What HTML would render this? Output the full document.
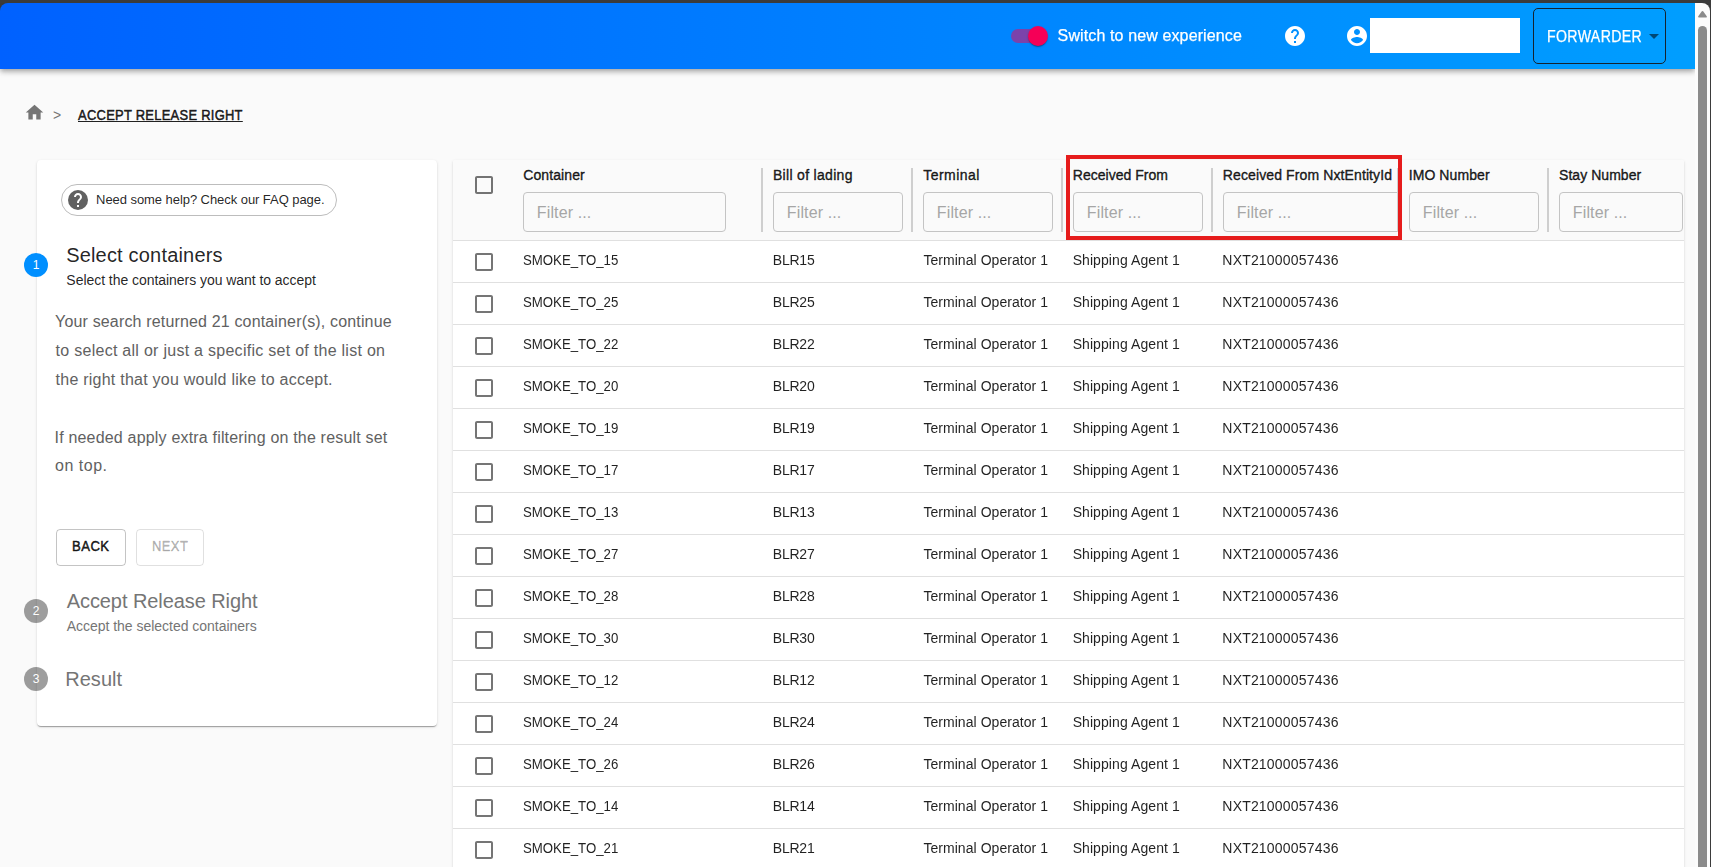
<!DOCTYPE html><html lang="en"><head><meta charset="utf-8"><title>Accept Release Right</title><style>
*{box-sizing:border-box;margin:0;padding:0}
html,body{width:1711px;height:867px;overflow:hidden;background:#3b3b3b}
body{font-family:"Liberation Sans",Arial,sans-serif;color:rgba(0,0,0,.87);position:relative}
.win{position:absolute;left:0;top:3px;width:1710px;height:864px;overflow:hidden}
.bg{position:absolute;left:0;top:40px;width:1710px;height:827px;background:#fafafa}
.pg{position:absolute;left:0;top:-3px;width:1710px;height:867px}
.abs{position:absolute}
.t{position:absolute;white-space:nowrap;line-height:1}
header{position:absolute;left:0;top:3px;width:1695px;height:66px;border-top-left-radius:8px;background:linear-gradient(90deg,#0061ff 0%,#009eff 100%);box-shadow:0 2px 4px -1px rgba(0,0,0,.2),0 4px 5px 0 rgba(0,0,0,.14),0 1px 10px 0 rgba(0,0,0,.12);z-index:5}
.sb{position:absolute;left:1695px;top:3px;width:15px;height:864px;background:#fcfcfc;z-index:6;border-top-right-radius:8px;overflow:hidden}
.sb .thumb{position:absolute;left:3px;top:23px;width:9px;height:900px;border-radius:5px;background:#8b8b8b}
.sb .arr{position:absolute;left:0;top:3px}
.track{position:absolute;left:1011px;top:29px;width:34px;height:14px;border-radius:7px;background:#f50057;opacity:.5;z-index:7}
.knob{position:absolute;left:1028px;top:26px;width:20px;height:20px;border-radius:50%;background:#f50057;box-shadow:0 2px 1px -1px rgba(0,0,0,.2),0 1px 1px 0 rgba(0,0,0,.14),0 1px 3px 0 rgba(0,0,0,.12);z-index:7}
.name{position:absolute;left:1370.300px;top:17.600px;width:149.700px;height:35px;background:#fff;z-index:7}
.role{position:absolute;left:1533px;top:8px;width:133px;height:56px;border:1px solid #15232e;border-radius:5px;z-index:7}
.car{position:absolute;left:1649px;top:34px;width:0;height:0;border-left:5px solid transparent;border-right:5px solid transparent;border-top:5px solid rgba(0,0,0,.54);z-index:7}
.hz{z-index:7}
.card{position:absolute;left:37px;top:160px;width:400px;height:566px;background:#fff;border-radius:4px;box-shadow:0 2px 1px -1px rgba(0,0,0,.2),0 1px 1px 0 rgba(0,0,0,.14),0 1px 3px 0 rgba(0,0,0,.12)}
.chip{position:absolute;left:61px;top:184px;width:276px;height:32px;border:1px solid #bdbdbd;border-radius:16px}
.num{position:absolute;width:24px;height:24px;border-radius:50%;color:#fff;font-size:12px;text-align:center;line-height:24px}
.btn{position:absolute;top:529px;height:37px;border-radius:4px;border:1px solid rgba(0,0,0,.23)}
.tbl{position:absolute;left:453px;top:160px;width:1231px;height:720px;background:#fff;box-shadow:0 2px 1px -1px rgba(0,0,0,.2),0 1px 1px 0 rgba(0,0,0,.14),0 1px 3px 0 rgba(0,0,0,.12);border-radius:2px 2px 0 0}
.thead{position:absolute;left:453px;top:160px;width:1231px;height:81px;background:#fafafa;border-bottom:1px solid #e0e0e0;border-radius:2px 2px 0 0}
.hl{position:absolute;left:453px;width:1231px;height:1px;background:#e0e0e0}
.cb{position:absolute;left:472px;width:24px;height:24px}
.th{-webkit-text-stroke:.4px rgba(0,0,0,.87)}
.fi{position:absolute;top:192px;height:40px;border:1px solid #c4c4c4;border-radius:4px}
.ph{font-size:16px;color:#a6a6a6}
.sep{position:absolute;top:168px;width:2px;height:64px;background:#cfcfcf}
.td{font-size:14px}
.rows{position:absolute;left:0;top:0;width:1695px;height:867px;will-change:transform}
.red{position:absolute;left:1066px;top:155px;width:336px;height:85px;border:4px solid #e61c1c;z-index:4}
</style></head><body><div class="win"><div class="pg"><div class="bg"></div>
<header></header>
<div class="track"></div><div class="knob"></div>
<div class="t hz" id="sw" style="left:1057.61px;top:28px;font-size:16px;letter-spacing:0.122px;color:#fff;-webkit-text-stroke:.25px #fff">Switch to new experience</div>
<svg class="abs hz" style="left:1283px;top:24px" width="24" height="24" viewBox="0 0 24 24"><path fill="#fff" d="M12 2C6.48 2 2 6.48 2 12s4.48 10 10 10 10-4.48 10-10S17.520 2 12 2zm1 17h-2v-2h2v2zm2.070-7.750l-.9.920C13.450 12.900 13 13.500 13 15h-2v-.5c0-1.100.450-2.100 1.170-2.830l1.240-1.260c.370-.360.590-.860.590-1.410 0-1.100-.9-2-2-2s-2 .9-2 2H8c0-2.210 1.790-4 4-4s4 1.790 4 4c0 .880-.360 1.680-.930 2.250z"/></svg>
<svg class="abs hz" style="left:1345px;top:24px" width="24" height="24" viewBox="0 0 24 24"><path fill="#fff" d="M12 2C6.48 2 2 6.48 2 12s4.48 10 10 10 10-4.48 10-10S17.520 2 12 2zm0 3c1.660 0 3 1.340 3 3s-1.340 3-3 3-3-1.340-3-3 1.340-3 3-3zm0 14.200c-2.500 0-4.710-1.280-6-3.220.030-1.990 4-3.080 6-3.080 1.990 0 5.970 1.090 6 3.080-1.290 1.940-3.500 3.220-6 3.220z"/></svg>
<div class="name"></div>
<div class="role"></div><div class="car"></div>
<div class="t hz" id="fw" style="left:1547.4px;top:29px;font-size:16px;transform-origin:0 50%;transform:scaleX(0.8843);letter-spacing:0.4px;color:#fff;-webkit-text-stroke:.25px #fff">FORWARDER</div>
<div class="sb"><svg class="arr" width="15" height="16" viewBox="0 0 15 16"><path d="M7.500 5.800 L11.100 10.800 L3.900 10.800 Z" fill="#8b8b8b" stroke="#8b8b8b" stroke-width="1.600" stroke-linejoin="round"/></svg><div class="thumb"></div></div>
<svg class="abs" style="left:24px;top:102.200px" width="21" height="21" viewBox="0 0 24 24"><path fill="#757575" d="M10 20v-6h4v6h5v-8h3L12 3 2 12h3v8z"/></svg>
<div class="t " id="gt" style="left:53.02px;top:108.3px;font-size:14px;color:#757575">&gt;</div>
<div class="t " id="bc" style="left:78.1px;top:108px;font-size:14px;transform-origin:0 50%;transform:scaleX(0.9235);letter-spacing:0.3px;-webkit-text-stroke:.5px rgba(0,0,0,.87);text-decoration:underline">ACCEPT RELEASE RIGHT</div>
<div class="card"></div>
<div class="chip"></div>
<svg class="abs" style="left:66px;top:188px" width="24" height="24" viewBox="0 0 24 24"><circle cx="12" cy="12" r="10" fill="#616161"/><path fill="#fff" d="M13 19h-2v-2h2v2zm2.070-7.750l-.9.920C13.450 12.900 13 13.500 13 15h-2v-.5c0-1.100.450-2.100 1.170-2.830l1.240-1.260c.370-.360.590-.860.590-1.410 0-1.100-.9-2-2-2s-2 .9-2 2H8c0-2.210 1.790-4 4-4s4 1.790 4 4c0 .880-.360 1.680-.930 2.250z"/></svg>
<div class="t " id="faq" style="left:96.09px;top:193px;font-size:13px;letter-spacing:-0.061px">Need some help? Check our FAQ page.</div>
<div class="num" style="left:24px;top:253px;background:#008fff">1</div>
<div class="t " id="s1" style="left:66.15px;top:245.21px;font-size:20px;letter-spacing:0.188px">Select containers</div>
<div class="t " id="s1b" style="left:66.37px;top:273px;font-size:14px;letter-spacing:-0.048px">Select the containers you want to accept</div>
<div class="t " id="p0" style="left:55.09px;top:314px;font-size:16px;letter-spacing:0.159px;color:#616161">Your search returned 21 container(s), continue</div>
<div class="t " id="p1" style="left:55.58px;top:342.8px;font-size:16px;letter-spacing:0.274px;color:#616161">to select all or just a specific set of the list on</div>
<div class="t " id="p2" style="left:55.58px;top:371.61px;font-size:16px;letter-spacing:0.237px;color:#616161">the right that you would like to accept.</div>
<div class="t " id="p4" style="left:54.57px;top:430.31px;font-size:16px;letter-spacing:0.185px;color:#616161">If needed apply extra filtering on the result set</div>
<div class="t " id="p5" style="left:55.12px;top:458px;font-size:16px;letter-spacing:0.492px;color:#616161">on top.</div>
<div class="btn" style="left:56px;width:70px"></div>
<div class="btn" style="left:136px;width:68px;border-color:rgba(0,0,0,.12)"></div>
<div class="t " id="back" style="left:71.98px;top:539px;font-size:14px;transform-origin:0 50%;transform:scaleX(0.9355);letter-spacing:0.5px;-webkit-text-stroke:.5px rgba(0,0,0,.87)">BACK</div>
<div class="t " id="next" style="left:151.51px;top:539px;font-size:14px;transform-origin:0 50%;transform:scaleX(0.9218);letter-spacing:0.5px;-webkit-text-stroke:.5px rgba(0,0,0,.26);color:rgba(0,0,0,.26)">NEXT</div>
<div class="num" style="left:24px;top:599px;background:rgba(0,0,0,.38)">2</div>
<div class="t " id="s2" style="left:66.69px;top:591px;font-size:20px;letter-spacing:-0.072px;color:#757575">Accept Release Right</div>
<div class="t " id="s2b" style="left:66.68px;top:619px;font-size:14px;letter-spacing:-0.020px;color:#757575">Accept the selected containers</div>
<div class="num" style="left:24px;top:667px;background:rgba(0,0,0,.38)">3</div>
<div class="t " id="s3" style="left:65.2px;top:669px;font-size:20px;letter-spacing:0.044px;color:#757575">Result</div>
<div class="tbl"></div><div class="thead"></div>
<svg class="cb" style="top:173px" viewBox="0 0 24 24"><path fill="rgba(0,0,0,.54)" d="M19 5v14H5V5h14m0-2H5c-1.100 0-2 .9-2 2v14c0 1.100.9 2 2 2h14c1.100 0 2-.9 2-2V5c0-1.100-.9-2-2-2z"/></svg>
<div class="t th" id="th0" style="left:523.18px;top:168px;font-size:14px;letter-spacing:0.108px">Container</div>
<div class="fi" style="left:523px;width:203px"></div>
<div class="t ph" id="ph" style="left:536.87px;top:205px;font-size:16px;letter-spacing:0.113px">Filter ...</div>
<div class="t th" id="th1" style="left:772.96px;top:168px;font-size:14px;letter-spacing:0.308px">Bill of lading</div>
<div class="fi" style="left:773px;width:130px"></div>
<div class="t ph" style="left:786.87px;top:205px;font-size:16px;letter-spacing:0.113px">Filter ...</div>
<div class="t th" id="th2" style="left:923.37px;top:168px;font-size:14px;letter-spacing:0.432px">Terminal</div>
<div class="fi" style="left:923px;width:130px"></div>
<div class="t ph" style="left:936.87px;top:205px;font-size:16px;letter-spacing:0.113px">Filter ...</div>
<div class="t th" id="th3" style="left:1072.85px;top:168px;font-size:14px;letter-spacing:0.014px">Received From</div>
<div class="fi" style="left:1073px;width:130px"></div>
<div class="t ph" style="left:1086.87px;top:205px;font-size:16px;letter-spacing:0.113px">Filter ...</div>
<div class="t th" id="th4" style="left:1222.85px;top:168px;font-size:14px;letter-spacing:0.111px">Received From NxtEntityId</div>
<div class="fi" style="left:1223px;width:178px"></div>
<div class="t ph" style="left:1236.87px;top:205px;font-size:16px;letter-spacing:0.113px">Filter ...</div>
<div class="t th" id="th5" style="left:1408.69px;top:168px;font-size:14px;letter-spacing:0.081px">IMO Number</div>
<div class="fi" style="left:1409px;width:130px"></div>
<div class="t ph" style="left:1422.87px;top:205px;font-size:16px;letter-spacing:0.113px">Filter ...</div>
<div class="t th" id="th6" style="left:1559.06px;top:168px;font-size:14px;letter-spacing:0.045px">Stay Number</div>
<div class="fi" style="left:1559px;width:124px"></div>
<div class="t ph" style="left:1572.87px;top:205px;font-size:16px;letter-spacing:0.113px">Filter ...</div>
<div class="sep" style="left:761px"></div>
<div class="sep" style="left:911px"></div>
<div class="sep" style="left:1061px"></div>
<div class="sep" style="left:1211px"></div>
<div class="sep" style="left:1397px"></div>
<div class="sep" style="left:1547px"></div>
<div class="rows">
<div class="hl" style="top:282px"></div>
<svg class="cb" style="top:250px" viewBox="0 0 24 24"><path fill="rgba(0,0,0,.54)" d="M19 5v14H5V5h14m0-2H5c-1.100 0-2 .9-2 2v14c0 1.100.9 2 2 2h14c1.100 0 2-.9 2-2V5c0-1.100-.9-2-2-2z"/></svg>
<div class="t td" id="c0" style="left:522.71px;top:253.21px;font-size:14px;transform-origin:0 50%;transform:scaleX(0.9446)">SMOKE_TO_15</div>
<div class="t td" id="c1" style="left:772.82px;top:253.21px;font-size:14px;letter-spacing:-0.238px">BLR15</div>
<div class="t td" id="c2" style="left:923.39px;top:253.21px;font-size:14px;letter-spacing:0.051px">Terminal Operator 1</div>
<div class="t td" id="c3" style="left:1072.63px;top:253.21px;font-size:14px;letter-spacing:0.086px">Shipping Agent 1</div>
<div class="t td" id="c4" style="left:1222.33px;top:253.21px;font-size:14px;letter-spacing:0.189px">NXT21000057436</div>
<div class="hl" style="top:324px"></div>
<svg class="cb" style="top:292px" viewBox="0 0 24 24"><path fill="rgba(0,0,0,.54)" d="M19 5v14H5V5h14m0-2H5c-1.100 0-2 .9-2 2v14c0 1.100.9 2 2 2h14c1.100 0 2-.9 2-2V5c0-1.100-.9-2-2-2z"/></svg>
<div class="t td" style="left:522.71px;top:295.21px;font-size:14px;transform-origin:0 50%;transform:scaleX(0.9446)">SMOKE_TO_25</div>
<div class="t td" style="left:772.82px;top:295.21px;font-size:14px;letter-spacing:-0.238px">BLR25</div>
<div class="t td" style="left:923.39px;top:295.21px;font-size:14px;letter-spacing:0.051px">Terminal Operator 1</div>
<div class="t td" style="left:1072.63px;top:295.21px;font-size:14px;letter-spacing:0.086px">Shipping Agent 1</div>
<div class="t td" style="left:1222.33px;top:295.21px;font-size:14px;letter-spacing:0.189px">NXT21000057436</div>
<div class="hl" style="top:366px"></div>
<svg class="cb" style="top:334px" viewBox="0 0 24 24"><path fill="rgba(0,0,0,.54)" d="M19 5v14H5V5h14m0-2H5c-1.100 0-2 .9-2 2v14c0 1.100.9 2 2 2h14c1.100 0 2-.9 2-2V5c0-1.100-.9-2-2-2z"/></svg>
<div class="t td" style="left:522.71px;top:337.21px;font-size:14px;transform-origin:0 50%;transform:scaleX(0.9446)">SMOKE_TO_22</div>
<div class="t td" style="left:772.82px;top:337.21px;font-size:14px;letter-spacing:-0.238px">BLR22</div>
<div class="t td" style="left:923.39px;top:337.21px;font-size:14px;letter-spacing:0.051px">Terminal Operator 1</div>
<div class="t td" style="left:1072.63px;top:337.21px;font-size:14px;letter-spacing:0.086px">Shipping Agent 1</div>
<div class="t td" style="left:1222.33px;top:337.21px;font-size:14px;letter-spacing:0.189px">NXT21000057436</div>
<div class="hl" style="top:408px"></div>
<svg class="cb" style="top:376px" viewBox="0 0 24 24"><path fill="rgba(0,0,0,.54)" d="M19 5v14H5V5h14m0-2H5c-1.100 0-2 .9-2 2v14c0 1.100.9 2 2 2h14c1.100 0 2-.9 2-2V5c0-1.100-.9-2-2-2z"/></svg>
<div class="t td" style="left:522.71px;top:379.21px;font-size:14px;transform-origin:0 50%;transform:scaleX(0.9446)">SMOKE_TO_20</div>
<div class="t td" style="left:772.82px;top:379.21px;font-size:14px;letter-spacing:-0.238px">BLR20</div>
<div class="t td" style="left:923.39px;top:379.21px;font-size:14px;letter-spacing:0.051px">Terminal Operator 1</div>
<div class="t td" style="left:1072.63px;top:379.21px;font-size:14px;letter-spacing:0.086px">Shipping Agent 1</div>
<div class="t td" style="left:1222.33px;top:379.21px;font-size:14px;letter-spacing:0.189px">NXT21000057436</div>
<div class="hl" style="top:450px"></div>
<svg class="cb" style="top:418px" viewBox="0 0 24 24"><path fill="rgba(0,0,0,.54)" d="M19 5v14H5V5h14m0-2H5c-1.100 0-2 .9-2 2v14c0 1.100.9 2 2 2h14c1.100 0 2-.9 2-2V5c0-1.100-.9-2-2-2z"/></svg>
<div class="t td" style="left:522.71px;top:421.21px;font-size:14px;transform-origin:0 50%;transform:scaleX(0.9446)">SMOKE_TO_19</div>
<div class="t td" style="left:772.82px;top:421.21px;font-size:14px;letter-spacing:-0.238px">BLR19</div>
<div class="t td" style="left:923.39px;top:421.21px;font-size:14px;letter-spacing:0.051px">Terminal Operator 1</div>
<div class="t td" style="left:1072.63px;top:421.21px;font-size:14px;letter-spacing:0.086px">Shipping Agent 1</div>
<div class="t td" style="left:1222.33px;top:421.21px;font-size:14px;letter-spacing:0.189px">NXT21000057436</div>
<div class="hl" style="top:492px"></div>
<svg class="cb" style="top:460px" viewBox="0 0 24 24"><path fill="rgba(0,0,0,.54)" d="M19 5v14H5V5h14m0-2H5c-1.100 0-2 .9-2 2v14c0 1.100.9 2 2 2h14c1.100 0 2-.9 2-2V5c0-1.100-.9-2-2-2z"/></svg>
<div class="t td" style="left:522.71px;top:463.21px;font-size:14px;transform-origin:0 50%;transform:scaleX(0.9446)">SMOKE_TO_17</div>
<div class="t td" style="left:772.82px;top:463.21px;font-size:14px;letter-spacing:-0.238px">BLR17</div>
<div class="t td" style="left:923.39px;top:463.21px;font-size:14px;letter-spacing:0.051px">Terminal Operator 1</div>
<div class="t td" style="left:1072.63px;top:463.21px;font-size:14px;letter-spacing:0.086px">Shipping Agent 1</div>
<div class="t td" style="left:1222.33px;top:463.21px;font-size:14px;letter-spacing:0.189px">NXT21000057436</div>
<div class="hl" style="top:534px"></div>
<svg class="cb" style="top:502px" viewBox="0 0 24 24"><path fill="rgba(0,0,0,.54)" d="M19 5v14H5V5h14m0-2H5c-1.100 0-2 .9-2 2v14c0 1.100.9 2 2 2h14c1.100 0 2-.9 2-2V5c0-1.100-.9-2-2-2z"/></svg>
<div class="t td" style="left:522.71px;top:505.21px;font-size:14px;transform-origin:0 50%;transform:scaleX(0.9446)">SMOKE_TO_13</div>
<div class="t td" style="left:772.82px;top:505.21px;font-size:14px;letter-spacing:-0.238px">BLR13</div>
<div class="t td" style="left:923.39px;top:505.21px;font-size:14px;letter-spacing:0.051px">Terminal Operator 1</div>
<div class="t td" style="left:1072.63px;top:505.21px;font-size:14px;letter-spacing:0.086px">Shipping Agent 1</div>
<div class="t td" style="left:1222.33px;top:505.21px;font-size:14px;letter-spacing:0.189px">NXT21000057436</div>
<div class="hl" style="top:576px"></div>
<svg class="cb" style="top:544px" viewBox="0 0 24 24"><path fill="rgba(0,0,0,.54)" d="M19 5v14H5V5h14m0-2H5c-1.100 0-2 .9-2 2v14c0 1.100.9 2 2 2h14c1.100 0 2-.9 2-2V5c0-1.100-.9-2-2-2z"/></svg>
<div class="t td" style="left:522.71px;top:547.21px;font-size:14px;transform-origin:0 50%;transform:scaleX(0.9446)">SMOKE_TO_27</div>
<div class="t td" style="left:772.82px;top:547.21px;font-size:14px;letter-spacing:-0.238px">BLR27</div>
<div class="t td" style="left:923.39px;top:547.21px;font-size:14px;letter-spacing:0.051px">Terminal Operator 1</div>
<div class="t td" style="left:1072.63px;top:547.21px;font-size:14px;letter-spacing:0.086px">Shipping Agent 1</div>
<div class="t td" style="left:1222.33px;top:547.21px;font-size:14px;letter-spacing:0.189px">NXT21000057436</div>
<div class="hl" style="top:618px"></div>
<svg class="cb" style="top:586px" viewBox="0 0 24 24"><path fill="rgba(0,0,0,.54)" d="M19 5v14H5V5h14m0-2H5c-1.100 0-2 .9-2 2v14c0 1.100.9 2 2 2h14c1.100 0 2-.9 2-2V5c0-1.100-.9-2-2-2z"/></svg>
<div class="t td" style="left:522.71px;top:589.21px;font-size:14px;transform-origin:0 50%;transform:scaleX(0.9446)">SMOKE_TO_28</div>
<div class="t td" style="left:772.82px;top:589.21px;font-size:14px;letter-spacing:-0.238px">BLR28</div>
<div class="t td" style="left:923.39px;top:589.21px;font-size:14px;letter-spacing:0.051px">Terminal Operator 1</div>
<div class="t td" style="left:1072.63px;top:589.21px;font-size:14px;letter-spacing:0.086px">Shipping Agent 1</div>
<div class="t td" style="left:1222.33px;top:589.21px;font-size:14px;letter-spacing:0.189px">NXT21000057436</div>
<div class="hl" style="top:660px"></div>
<svg class="cb" style="top:628px" viewBox="0 0 24 24"><path fill="rgba(0,0,0,.54)" d="M19 5v14H5V5h14m0-2H5c-1.100 0-2 .9-2 2v14c0 1.100.9 2 2 2h14c1.100 0 2-.9 2-2V5c0-1.100-.9-2-2-2z"/></svg>
<div class="t td" style="left:522.71px;top:631.21px;font-size:14px;transform-origin:0 50%;transform:scaleX(0.9446)">SMOKE_TO_30</div>
<div class="t td" style="left:772.82px;top:631.21px;font-size:14px;letter-spacing:-0.238px">BLR30</div>
<div class="t td" style="left:923.39px;top:631.21px;font-size:14px;letter-spacing:0.051px">Terminal Operator 1</div>
<div class="t td" style="left:1072.63px;top:631.21px;font-size:14px;letter-spacing:0.086px">Shipping Agent 1</div>
<div class="t td" style="left:1222.33px;top:631.21px;font-size:14px;letter-spacing:0.189px">NXT21000057436</div>
<div class="hl" style="top:702px"></div>
<svg class="cb" style="top:670px" viewBox="0 0 24 24"><path fill="rgba(0,0,0,.54)" d="M19 5v14H5V5h14m0-2H5c-1.100 0-2 .9-2 2v14c0 1.100.9 2 2 2h14c1.100 0 2-.9 2-2V5c0-1.100-.9-2-2-2z"/></svg>
<div class="t td" style="left:522.71px;top:673.21px;font-size:14px;transform-origin:0 50%;transform:scaleX(0.9446)">SMOKE_TO_12</div>
<div class="t td" style="left:772.82px;top:673.21px;font-size:14px;letter-spacing:-0.238px">BLR12</div>
<div class="t td" style="left:923.39px;top:673.21px;font-size:14px;letter-spacing:0.051px">Terminal Operator 1</div>
<div class="t td" style="left:1072.63px;top:673.21px;font-size:14px;letter-spacing:0.086px">Shipping Agent 1</div>
<div class="t td" style="left:1222.33px;top:673.21px;font-size:14px;letter-spacing:0.189px">NXT21000057436</div>
<div class="hl" style="top:744px"></div>
<svg class="cb" style="top:712px" viewBox="0 0 24 24"><path fill="rgba(0,0,0,.54)" d="M19 5v14H5V5h14m0-2H5c-1.100 0-2 .9-2 2v14c0 1.100.9 2 2 2h14c1.100 0 2-.9 2-2V5c0-1.100-.9-2-2-2z"/></svg>
<div class="t td" style="left:522.71px;top:715.21px;font-size:14px;transform-origin:0 50%;transform:scaleX(0.9446)">SMOKE_TO_24</div>
<div class="t td" style="left:772.82px;top:715.21px;font-size:14px;letter-spacing:-0.238px">BLR24</div>
<div class="t td" style="left:923.39px;top:715.21px;font-size:14px;letter-spacing:0.051px">Terminal Operator 1</div>
<div class="t td" style="left:1072.63px;top:715.21px;font-size:14px;letter-spacing:0.086px">Shipping Agent 1</div>
<div class="t td" style="left:1222.33px;top:715.21px;font-size:14px;letter-spacing:0.189px">NXT21000057436</div>
<div class="hl" style="top:786px"></div>
<svg class="cb" style="top:754px" viewBox="0 0 24 24"><path fill="rgba(0,0,0,.54)" d="M19 5v14H5V5h14m0-2H5c-1.100 0-2 .9-2 2v14c0 1.100.9 2 2 2h14c1.100 0 2-.9 2-2V5c0-1.100-.9-2-2-2z"/></svg>
<div class="t td" style="left:522.71px;top:757.21px;font-size:14px;transform-origin:0 50%;transform:scaleX(0.9446)">SMOKE_TO_26</div>
<div class="t td" style="left:772.82px;top:757.21px;font-size:14px;letter-spacing:-0.238px">BLR26</div>
<div class="t td" style="left:923.39px;top:757.21px;font-size:14px;letter-spacing:0.051px">Terminal Operator 1</div>
<div class="t td" style="left:1072.63px;top:757.21px;font-size:14px;letter-spacing:0.086px">Shipping Agent 1</div>
<div class="t td" style="left:1222.33px;top:757.21px;font-size:14px;letter-spacing:0.189px">NXT21000057436</div>
<div class="hl" style="top:828px"></div>
<svg class="cb" style="top:796px" viewBox="0 0 24 24"><path fill="rgba(0,0,0,.54)" d="M19 5v14H5V5h14m0-2H5c-1.100 0-2 .9-2 2v14c0 1.100.9 2 2 2h14c1.100 0 2-.9 2-2V5c0-1.100-.9-2-2-2z"/></svg>
<div class="t td" style="left:522.71px;top:799.21px;font-size:14px;transform-origin:0 50%;transform:scaleX(0.9446)">SMOKE_TO_14</div>
<div class="t td" style="left:772.82px;top:799.21px;font-size:14px;letter-spacing:-0.238px">BLR14</div>
<div class="t td" style="left:923.39px;top:799.21px;font-size:14px;letter-spacing:0.051px">Terminal Operator 1</div>
<div class="t td" style="left:1072.63px;top:799.21px;font-size:14px;letter-spacing:0.086px">Shipping Agent 1</div>
<div class="t td" style="left:1222.33px;top:799.21px;font-size:14px;letter-spacing:0.189px">NXT21000057436</div>
<div class="hl" style="top:870px"></div>
<svg class="cb" style="top:838px" viewBox="0 0 24 24"><path fill="rgba(0,0,0,.54)" d="M19 5v14H5V5h14m0-2H5c-1.100 0-2 .9-2 2v14c0 1.100.9 2 2 2h14c1.100 0 2-.9 2-2V5c0-1.100-.9-2-2-2z"/></svg>
<div class="t td" style="left:522.71px;top:841.21px;font-size:14px;transform-origin:0 50%;transform:scaleX(0.9446)">SMOKE_TO_21</div>
<div class="t td" style="left:772.82px;top:841.21px;font-size:14px;letter-spacing:-0.238px">BLR21</div>
<div class="t td" style="left:923.39px;top:841.21px;font-size:14px;letter-spacing:0.051px">Terminal Operator 1</div>
<div class="t td" style="left:1072.63px;top:841.21px;font-size:14px;letter-spacing:0.086px">Shipping Agent 1</div>
<div class="t td" style="left:1222.33px;top:841.21px;font-size:14px;letter-spacing:0.189px">NXT21000057436</div>
</div>
<div class="red"></div>
</div></div></body></html>
